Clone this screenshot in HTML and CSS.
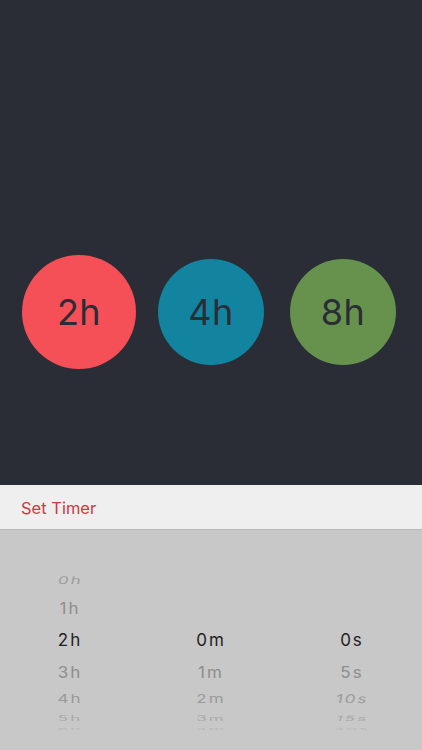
FILE: index.html
```html
<!DOCTYPE html>
<html>
<head>
<meta charset="utf-8">
<link rel="stylesheet" href="styles.css">
</head>
<body>
<div class="app">
  <section class="stage">
    <div class="circles">
      <div class="circle red">2h</div>
      <div class="circle blue">4h</div>
      <div class="circle green">8h</div>
    </div>
  </section>
  <header class="bar"><span class="bar-title">Set Timer</span></header>
  <section class="picker">
    <div class="col">
      <div class="row r1"><span class="lbl slant">0h</span></div>
      <div class="row r2"><span class="lbl">1h</span></div>
      <div class="row r3 sel"><span class="lbl">2h</span></div>
      <div class="row r4"><span class="lbl">3h</span></div>
      <div class="row r5"><span class="lbl">4h</span></div>
      <div class="row r6"><span class="lbl">5h</span></div>
      <div class="row r7"><span class="lbl">6h</span></div>
    </div>
    <div class="col">
      <div class="row r1"></div>
      <div class="row r2"></div>
      <div class="row r3 sel"><span class="lbl">0m</span></div>
      <div class="row r4"><span class="lbl">1m</span></div>
      <div class="row r5"><span class="lbl">2m</span></div>
      <div class="row r6"><span class="lbl">3m</span></div>
      <div class="row r7"><span class="lbl">4m</span></div>
    </div>
    <div class="col">
      <div class="row r1"></div>
      <div class="row r2"></div>
      <div class="row r3 sel"><span class="lbl">0s</span></div>
      <div class="row r4"><span class="lbl">5s</span></div>
      <div class="row r5"><span class="lbl slant">10s</span></div>
      <div class="row r6"><span class="lbl slant">15s</span></div>
      <div class="row r7"><span class="lbl">20s</span></div>
    </div>
  </section>
</div>
</body>
</html>
```
FILE: styles.css
```css
html, body {
  margin: 0;
  padding: 0;
}
body {
  width: 422px;
  height: 750px;
  overflow: hidden;
  font-family: Inter, Roboto, "Liberation Sans", sans-serif;
  background: #c8c8c8;
}
.app {
  display: flex;
  flex-direction: column;
  height: 750px;
}
.stage {
  height: 485px;
  background: #2a2d36;
  box-sizing: border-box;
  padding-top: 255px;
}
.circles {
  display: grid;
  grid-template-columns: 132px 132px 132px;
  justify-content: center;
  justify-items: center;
  align-items: center;
  height: 114px;
}
.circle {
  border-radius: 50%;
  display: flex;
  align-items: center;
  justify-content: center;
  color: #2a2d36;
  font-size: 36px;
  letter-spacing: 0.5px;
  width: 106px;
  height: 106px;
}
.circle.red {
  width: 114px;
  height: 114px;
  background: #f54f57;
}
.circle.blue {
  background: #12849f;
}
.circle.green {
  background: #67924e;
}
.bar {
  height: 44px;
  background: #efefef;
  border-bottom: 1px solid #b9b9b9;
  display: flex;
  align-items: center;
  padding-left: 21px;
}
.bar-title {
  color: #cb3a40;
  font-size: 16.5px;
  padding-top: 1px;
}
.picker {
  flex: 1;
  background: #c8c8c8;
  display: grid;
  grid-template-columns: 141px 141px 141px;
  justify-content: center;
  align-content: start;
  padding-top: 38px;
}
.col {
  display: flex;
  flex-direction: column;
  align-items: center;
}
.row {
  display: flex;
  align-items: center;
  justify-content: center;
  width: 100%;
  overflow: visible;
}
.lbl {
  display: inline-block;
  font-size: 17px;
  letter-spacing: 2px;
  line-height: 20px;
  color: #8a8a8a;
}
.r1 { height: 24px; }
.r2 { height: 32px; }
.r3 { height: 32px; }
.r4 { height: 32px; }
.r5 { height: 22px; }
.r6 { height: 16px; }
.r7 { height: 6px; }
.r1 .lbl { transform: scaleY(0.62); color: #9d9d9d; }
.r2 .lbl { transform: scaleY(0.94); color: #8e8e8e; }
.r3 .lbl { color: #1e1e1e; }
.r4 .lbl { transform: scaleY(0.94); color: #8e8e8e; }
.r5 .lbl { transform: scaleY(0.7); color: #9a9a9a; }
.r6 .lbl { transform: scaleY(0.42); color: #a9a9a9; }
.r7 .lbl { transform: scaleY(0.15); color: #b6b6b6; }
.r1 .lbl.slant { transform: scaleY(0.62) skewX(-8deg); }
.r5 .lbl.slant { transform: scaleY(0.7) skewX(-8deg); }
.r6 .lbl.slant { transform: scaleY(0.42) skewX(-8deg); }
```
